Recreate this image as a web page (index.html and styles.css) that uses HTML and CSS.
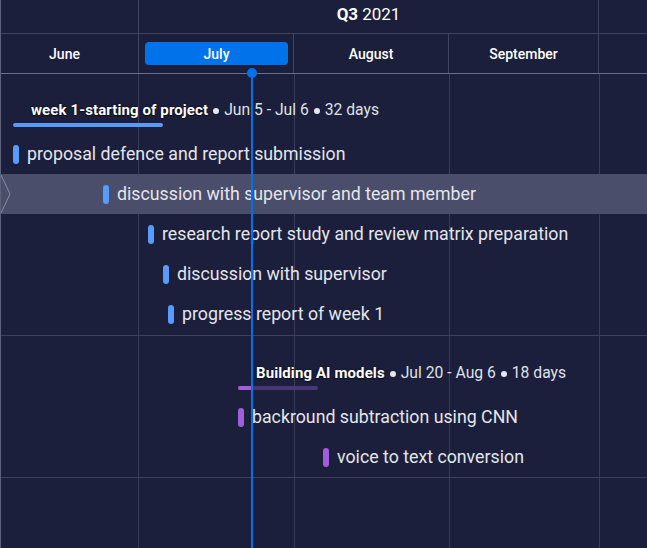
FILE: index.html
```html
<!DOCTYPE html>
<html>
<head>
<meta charset="utf-8">
<link rel="stylesheet" href="styles.css">
</head>
<body>
<div class="gantt">
  <div class="head-quarter">
    <div class="hq-cell hq-left"></div>
    <div class="hq-cell hq-main"><b>Q3</b> 2021</div>
    <div class="hq-cell hq-right"></div>
  </div>
  <div class="head-months">
    <div class="month m-june"><span>June</span></div>
    <div class="month m-july"><span class="pill">July</span></div>
    <div class="month m-aug"><span>August</span></div>
    <div class="month m-sep"><span>September</span></div>
    <div class="month m-rest"></div>
  </div>

  <div class="body">
    <section class="group g1">
      <div class="group-head" style="margin-left:12px">
        <div class="gh-label"><b>week 1-starting of project</b><span class="dot"></span><span class="meta">Jun 5 - Jul 6</span><span class="dot"></span><span class="meta">32 days</span></div>
        <div class="gh-bar blue" style="width:150px"></div>
      </div>
      <div class="task" style="padding-left:12px"><span class="mark blue"></span><span class="t">proposal defence and report submission</span></div>
      <div class="task selected" style="padding-left:102px">
        <svg class="chev" width="12" height="40" viewBox="0 0 12 40"><path d="M0 1 L9 20 L0 39" fill="none" stroke="#8a8ca3" stroke-width="1"/></svg>
        <span class="mark blue"></span><span class="t">discussion with supervisor and team member</span></div>
      <div class="task" style="padding-left:147px"><span class="mark blue"></span><span class="t">research report study and review matrix preparation</span></div>
      <div class="task" style="padding-left:162px"><span class="mark blue"></span><span class="t">discussion with supervisor</span></div>
      <div class="task" style="padding-left:167px"><span class="mark blue"></span><span class="t">progress report of week 1</span></div>
    </section>
    <section class="group g2">
      <div class="group-head" style="margin-left:237px">
        <div class="gh-label"><b>Building AI models</b><span class="dot"></span><span class="meta">Jul 20 - Aug 6</span><span class="dot"></span><span class="meta">18 days</span></div>
        <div class="gh-bar purple-track" style="width:80px"><div class="gh-progress" style="width:14px"></div></div>
      </div>
      <div class="task" style="padding-left:237px"><span class="mark purple"></span><span class="t">backround subtraction using CNN</span></div>
      <div class="task" style="padding-left:322px"><span class="mark purple"></span><span class="t">voice to text conversion</span></div>
    </section>
  </div>

  <div class="today"><span class="today-dot"></span></div>
</div>
</body>
</html>
```

FILE: styles.css
```css
* { box-sizing: border-box; }
html, body { margin: 0; padding: 0; }
body {
  background: #1c1f3b;
  font-family: Roboto, "Liberation Sans", sans-serif;
  color: #e3e5ec;
  width: 647px;
  height: 548px;
  overflow: hidden;
}
.gantt {
  position: relative;
  height: 548px;
  border-left: 1px solid #5e6079;
}
.head-quarter {
  display: flex;
  height: 34px;
  border-bottom: 1px solid #3f4260;
}
.hq-cell { height: 100%; }
.hq-left { width: 138px; border-right: 1px solid #3f4260; }
.hq-main {
  width: 460px;
  border-right: 1px solid #3f4260;
  display: flex;
  align-items: center;
  justify-content: center;
  font-size: 17px;
  color: #fff;
  padding-bottom: 6px;
}
.hq-main b { font-weight: 700; margin-right: 4px; }
.hq-right { flex: 1; }

.head-months {
  display: flex;
  height: 40px;
  border-bottom: 1px solid #6a6d8a;
}
.month {
  height: 100%;
  border-right: 1px solid #3f4260;
  display: flex;
  align-items: center;
  justify-content: center;
  font-size: 14px;
  font-weight: 500;
  color: #fff;
}
.m-june { width: 138px; padding-right: 10px; }
.m-july { width: 155px; padding: 0 5px 0 6px; }
.m-aug { width: 155px; }
.m-sep { width: 150px; }
.m-rest { flex: 1; border-right: none; }
.pill {
  display: flex;
  align-items: center;
  justify-content: center;
  width: 143px;
  height: 23px;
  background: #0073ea;
  border-radius: 4px;
}

.body {
  height: 474px;
  background-image:
    linear-gradient(#3b3d58, #3b3d58),
    linear-gradient(#3b3d58, #3b3d58),
    linear-gradient(#3b3d58, #3b3d58),
    linear-gradient(#3b3d58, #3b3d58);
  background-size: 1px 100%;
  background-repeat: no-repeat;
  background-position: 137px 0, 293px 0, 448px 0, 598px 0;
}
.group {
  border-bottom: 1px solid #3d3f5c;
}
.g1 { padding-bottom: 1px; }
.group-head {
  height: 60px;
  padding-top: 28px;
  display: flex;
  flex-direction: column;
}
.g2 .group-head { height: 61px; padding-top: 29px; }
.gh-label {
  margin-left: 18px;
  font-size: 15px;
  line-height: 16px;
  color: #dfe1e8;
  white-space: nowrap;
  display: flex;
  align-items: center;
}
.gh-label b {
  color: #fff;
  font-weight: 700;
  letter-spacing: 0.1px;
  text-shadow: 0 0 2px rgba(0,0,0,0.8), 0 1px 1px rgba(0,0,0,0.6);
}
.meta { font-size: 15.7px; }
.dot {
  width: 6px;
  height: 6px;
  border-radius: 50%;
  background: #e6e8ee;
  margin: 1px 5px 0 5px;
  flex: none;
}
.gh-bar {
  margin-top: 5px;
  height: 4px;
  border-radius: 2px;
  overflow: hidden;
}
.gh-bar.blue { background: #579bfc; }
.purple-track { background: #4a3775; }
.gh-progress { height: 100%; background: #a25ddc; }

.task {
  position: relative;
  height: 40px;
  display: flex;
  align-items: center;
  gap: 8px;
  font-size: 17.75px;
  white-space: nowrap;
}
.task.selected { background: #4b4e6a; }
.chev { position: absolute; left: 0; top: 0; }
.mark {
  width: 6px;
  height: 19px;
  border-radius: 3px;
  flex: none;
}
.mark.blue { background: #579bfc; }
.mark.purple { background: #a25ddc; }
.t { color: #e3e5ec; }

.today {
  position: absolute;
  left: 250px;
  top: 73px;
  bottom: 0;
  width: 2px;
  background: #0073ea;
}
.today-dot {
  position: absolute;
  left: -4px;
  top: -5px;
  width: 10px;
  height: 10px;
  border-radius: 50%;
  background: #0073ea;
}
```
